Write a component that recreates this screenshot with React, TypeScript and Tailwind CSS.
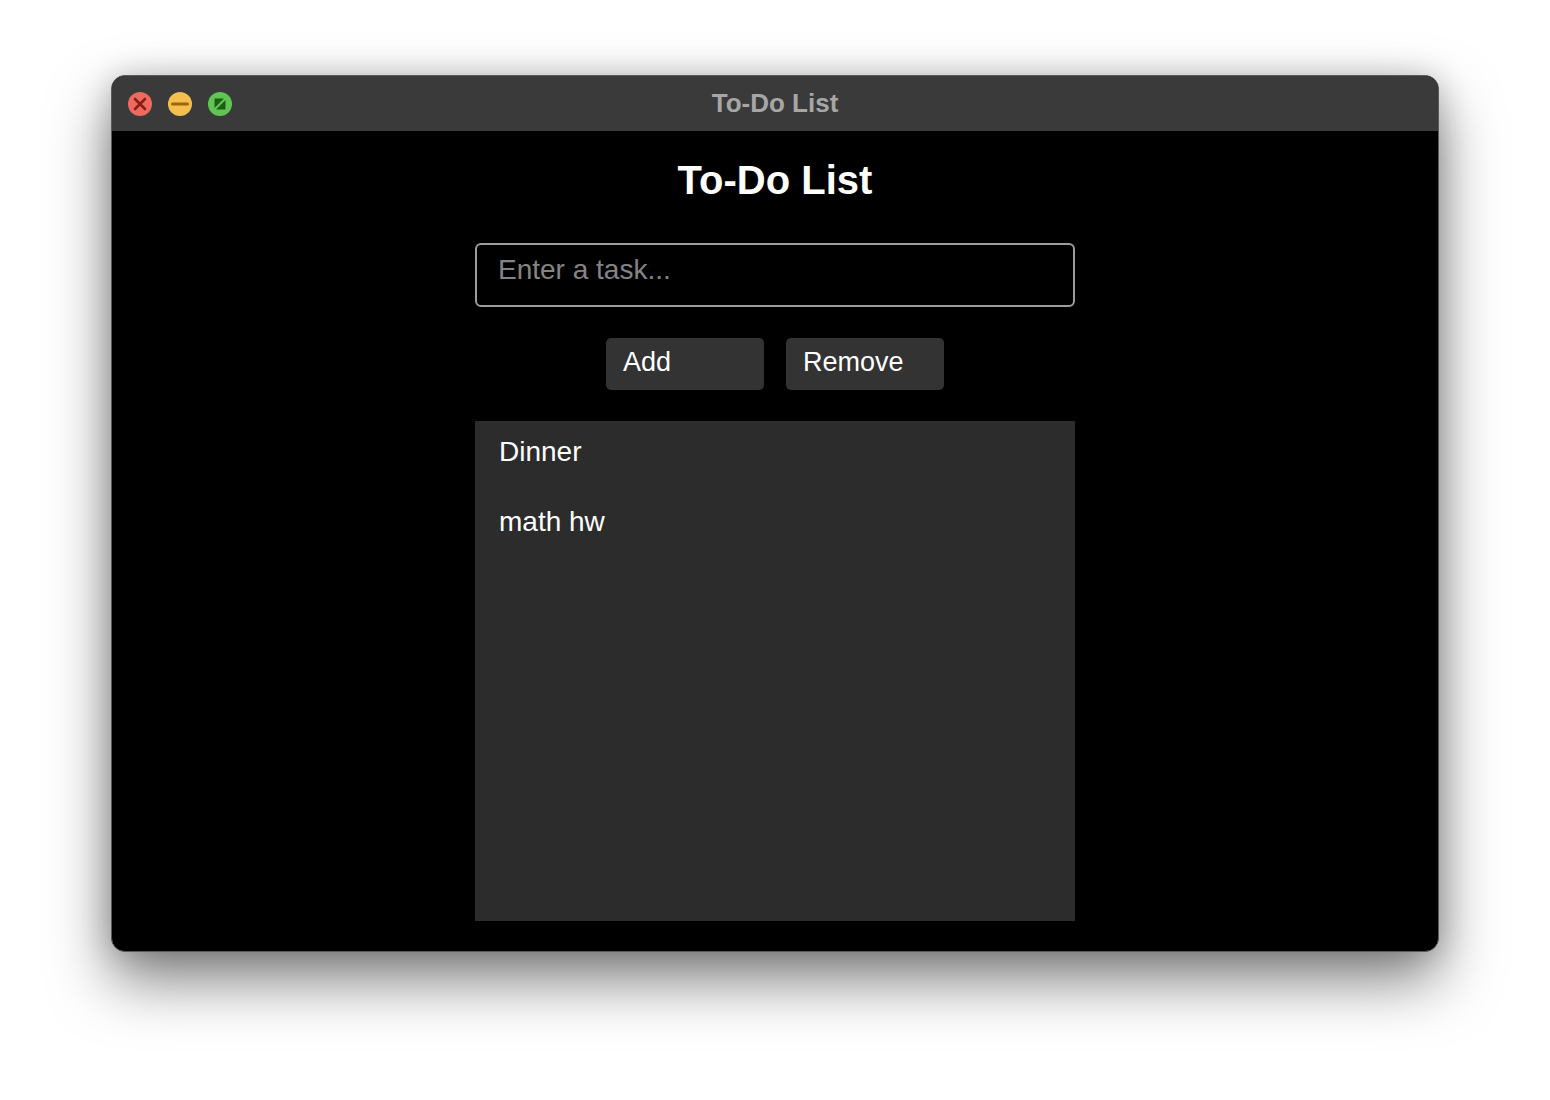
import React, { useState } from 'react';

const TrafficLights: React.FC = () => (
  <div className="flex items-center gap-[16px]">
    <div className="w-[24px] h-[24px] rounded-full bg-[#ec6a5e] flex items-center justify-center">
      <svg width="24" height="24" viewBox="0 0 24 24">
        <path d="M7 7 L17 17 M17 7 L7 17" stroke="#8f1c12" strokeWidth="2.6" strokeLinecap="round" />
      </svg>
    </div>
    <div className="w-[24px] h-[24px] rounded-full bg-[#f4bf4f] flex items-center justify-center">
      <svg width="24" height="24" viewBox="0 0 24 24">
        <path d="M4.5 12 L19.5 12" stroke="#9a6700" strokeWidth="3" strokeLinecap="round" />
      </svg>
    </div>
    <div className="w-[24px] h-[24px] rounded-full bg-[#61c554] flex items-center justify-center">
      <svg width="24" height="24" viewBox="0 0 24 24">
        <path d="M6.5 6.5 L16 6.5 L6.5 16 Z" fill="#1e5e14" />
        <path d="M17.5 17.5 L8 17.5 L17.5 8 Z" fill="#1e5e14" />
      </svg>
    </div>
  </div>
);

export default function App() {
  const [task, setTask] = useState('');
  const [tasks] = useState<string[]>(['Dinner', 'math hw']);

  return (
    <div
      className="w-full h-[1100px] bg-white pt-[75px]"
      style={{ fontFamily: '"Liberation Sans", Arial, sans-serif' }}
    >
      <div className="mx-auto w-[1328px] h-[877px] rounded-[14px] overflow-hidden border border-[#5a5a5a] bg-black flex flex-col shadow-[0_28px_60px_rgba(0,0,0,0.5),0_0_30px_rgba(0,0,0,0.18)]">
        <div className="h-[55px] bg-[#3a3a3a] flex items-center px-[16px] relative shrink-0">
          <TrafficLights />
          <div className="absolute inset-0 flex items-center justify-center text-[26px] font-bold text-[#a6a6a6] pointer-events-none">
            To-Do List
          </div>
        </div>

        <div className="flex flex-col items-center">
          <h1 className="mt-[27px] text-[40px] leading-[45px] font-bold text-white">To-Do List</h1>

          <input
            value={task}
            onChange={(e) => setTask(e.target.value)}
            placeholder="Enter a task..."
            className="mt-[40px] w-[600px] h-[64px] bg-black border-2 border-[#9c9c9c] rounded-[6px] pl-[21px] pr-[12px] pt-[9px] pb-[19px] text-[28px] leading-[32px] text-white placeholder:text-[#848484] outline-none"
          />

          <div className="mt-[31px] flex gap-[22px]">
            <button className="w-[158px] h-[52px] bg-[#333333] rounded-[5px] text-left pl-[17px] pt-[9px] text-[27px] leading-[31px] text-white flex items-start">
              Add
            </button>
            <button className="w-[158px] h-[52px] bg-[#333333] rounded-[5px] text-left pl-[17px] pt-[9px] text-[27px] leading-[31px] text-white flex items-start">
              Remove
            </button>
          </div>

          <ul className="mt-[31px] w-[600px] h-[500px] bg-[#2c2c2c] pt-[15px] pl-[24px]">
            {tasks.map((t) => (
              <li key={t} className="h-[70px] text-[28px] leading-[32px] text-white">
                {t}
              </li>
            ))}
          </ul>
        </div>
      </div>
    </div>
  );
}
